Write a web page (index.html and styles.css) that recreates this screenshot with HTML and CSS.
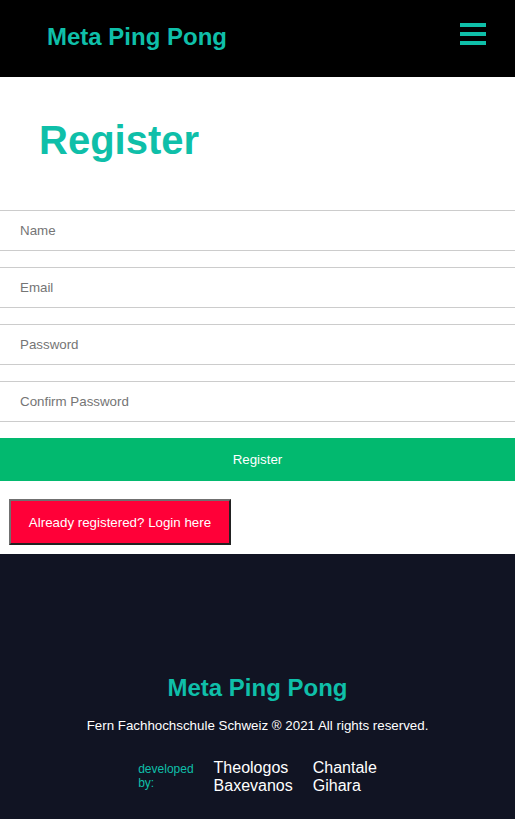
FILE: index.html
```html
<!DOCTYPE html>
<html lang="en">
<head>
<meta charset="utf-8">
<title>Register - Meta Ping Pong</title>
<link rel="stylesheet" href="styles.css">
</head>
<body>
<header class="topbar">
  <a class="brand" href="#">Meta Ping Pong</a>
  <button class="menu-btn" aria-label="Menu">
    <svg width="26" height="22" viewBox="0 0 26 22"><rect x="0" y="0" width="26" height="4" fill="#0fbfa9"/><rect x="0" y="9" width="26" height="4" fill="#0fbfa9"/><rect x="0" y="18" width="26" height="4" fill="#0fbfa9"/></svg>
  </button>
</header>
<main class="page">
  <h1 class="page-title">Register</h1>
  <form class="reg-form">
    <input class="field" type="text" placeholder="Name">
    <input class="field" type="email" placeholder="Email">
    <input class="field" type="password" placeholder="Password">
    <input class="field" type="password" placeholder="Confirm Password">
    <button class="submit-btn" type="button">Register</button>
  </form>
  <div class="login-row">
    <button class="login-btn" type="button">Already registered? Login here</button>
  </div>
</main>
<footer class="footer">
  <div class="footer-title">Meta Ping Pong</div>
  <p class="copyright">Fern Fachhochschule Schweiz ® 2021 All rights reserved.</p>
  <div class="devs">
    <div class="dev-label">developed<br>by:</div>
    <div class="dev-name">Theologos<br>Baxevanos</div>
    <div class="dev-name">Chantale<br>Gihara</div>
  </div>
</footer>
</body>
</html>
```
FILE: styles.css
```css
* { box-sizing: border-box; }
html, body { margin: 0; padding: 0; }
body {
  font-family: "Liberation Sans", Arial, sans-serif;
  background: #111423;
}
.topbar {
  height: 77px;
  background: #000;
  display: flex;
  align-items: center;
  justify-content: space-between;
  padding: 0 29px 0 47px;
}
.brand {
  color: #0fbfa9;
  font-weight: bold;
  font-size: 24px;
  text-decoration: none;
  line-height: 28px;
  margin-top: -4px;
}
.menu-btn {
  background: none;
  border: 0;
  padding: 0;
  margin-top: -10px;
  display: flex;
  cursor: pointer;
}
.page {
  background: #fff;
  padding-bottom: 9px;
}
.page-title {
  margin: 0;
  padding: 40px 40px 47px 39px;
  font-size: 40px;
  line-height: 46px;
  color: #0fbfa9;
  font-weight: bold;
}
.reg-form {
  display: flex;
  flex-direction: column;
  gap: 16px;
}
.field {
  display: block;
  width: 100%;
  height: 41px;
  border: 1px solid #cccccc;
  border-left: 0;
  border-right: 0;
  padding: 0 20px;
  font-family: "Liberation Sans", Arial, sans-serif;
  font-size: 13.333px;
  color: #333;
  background: #fff;
  outline: none;
}
.field::placeholder { color: #757575; }
.submit-btn {
  display: block;
  width: 100%;
  height: 43px;
  border: 0;
  background: #02b96f;
  color: #fff;
  font-family: "Liberation Sans", Arial, sans-serif;
  font-size: 13.333px;
  cursor: pointer;
}
.login-row {
  padding: 18px 9px 0;
}
.login-btn {
  display: block;
  width: 222px;
  height: 46px;
  background: #ff0038;
  color: #fff;
  border: 2px solid;
  border-color: #707070 #222 #222 #707070;
  font-family: "Liberation Sans", Arial, sans-serif;
  font-size: 13.333px;
  padding: 0;
  cursor: pointer;
}
.footer {
  padding: 120px 0 24px;
  text-align: center;
  color: #fff;
}
.footer-title {
  color: #0fbfa9;
  font-weight: bold;
  font-size: 24px;
  line-height: 28px;
}
.copyright {
  margin: 16px 0 0;
  font-size: 13.333px;
  line-height: 16px;
}
.devs {
  margin-top: 25px;
  display: flex;
  justify-content: center;
  gap: 20px;
  text-align: left;
}
.dev-label {
  color: #0fbfa9;
  font-size: 12px;
  line-height: 14px;
  padding-top: 3px;
}
.dev-name {
  font-size: 16px;
  line-height: 18px;
}
```
